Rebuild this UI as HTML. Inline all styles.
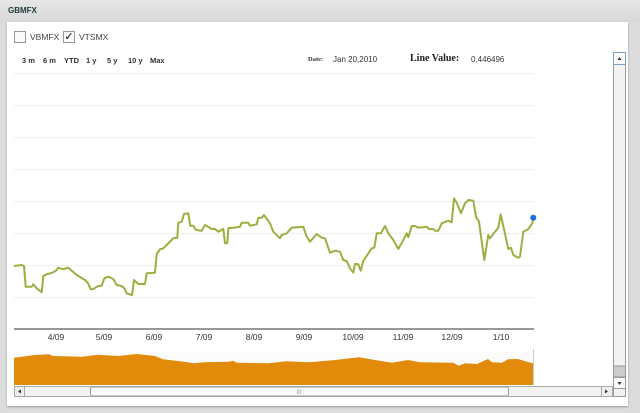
<!DOCTYPE html>
<html><head><style>
body{margin:0;width:640px;height:413px;background:#dcdcdc;font-family:"Liberation Sans",Verdana,sans-serif;overflow:hidden;position:relative}
.abs{position:absolute}
.t{font-size:8px;color:#333}
.r{position:absolute;top:56px;font-size:7.5px;font-weight:bold;color:#333}
</style></head><body>
<div class="abs" style="left:0;top:0;width:640px;height:22px;background:linear-gradient(#e6e6e6,#d8d8d8)"></div>
<div class="abs" style="left:8px;top:6px;font-size:8px;font-weight:bold;color:#1f3a3a">GBMFX</div>
<div class="abs" style="left:7px;top:22px;width:621px;height:384px;background:#fff;box-shadow:0 1px 2px #999"></div>
<div class="abs" style="left:14px;top:31px;width:10px;height:10px;border:1px solid #999;background:#fafafa"></div>
<div class="abs t" style="left:30px;top:32px;font-size:8.5px;color:#444">VBMFX</div>
<div class="abs" style="left:63px;top:31px;width:10px;height:10px;border:1px solid #999;background:#fafafa;font-size:11px;line-height:10px;text-align:center">✓</div>
<div class="abs t" style="left:79px;top:32px;font-size:8.5px;color:#444">VTSMX</div>
<div class="r" style="left:22px">3 m</div>
<div class="r" style="left:43px">6 m</div>
<div class="r" style="left:64px">YTD</div>
<div class="r" style="left:86px">1 y</div>
<div class="r" style="left:107px">5 y</div>
<div class="r" style="left:128px">10 y</div>
<div class="r" style="left:150px">Max</div>
<div class="abs" style="left:308px;top:56px;font-size:6.5px;font-weight:bold;font-family:'Liberation Serif',serif;color:#333">Date:</div>
<div class="abs" style="left:333px;top:55px;font-size:8px;color:#333">Jan 20,2010</div>
<div class="abs" style="left:410px;top:53px;font-size:10px;font-weight:bold;font-family:'Liberation Serif',serif;color:#222">Line Value:</div>
<div class="abs" style="left:471px;top:55px;font-size:8px;color:#333">0.446496</div>
<svg class="abs" style="left:0;top:0" width="640" height="413">
<g stroke="#eeeeee" stroke-width="1">
<line x1="14" y1="73.5" x2="534" y2="73.5"/><line x1="14" y1="105.5" x2="534" y2="105.5"/><line x1="14" y1="137.5" x2="534" y2="137.5"/><line x1="14" y1="169.5" x2="534" y2="169.5"/><line x1="14" y1="201.5" x2="534" y2="201.5"/><line x1="14" y1="233.5" x2="534" y2="233.5"/><line x1="14" y1="265.5" x2="534" y2="265.5"/><line x1="14" y1="297.5" x2="534" y2="297.5"/>
</g>
<line x1="14" y1="329" x2="534" y2="329" stroke="#777" stroke-width="1.5"/>
<polyline fill="none" stroke="#9ab040" stroke-width="2" stroke-linejoin="round" points="14,266 21.7,265 24,266 25.7,286.7 31.7,286.7 33.3,284.3 36.7,288.3 41.7,292.3 43.3,276 46.7,274.3 53.3,272.3 56.7,270 58.3,267.7 63.3,269.3 68.3,267.7 76.7,275 85,280 87.7,282.7 90.7,289.3 93.3,289 98.3,286 101.7,285.7 104.3,278.3 108.3,276.7 113.3,279 116.7,285 121.7,286 124.3,288.3 126.7,293.3 132,295 134,280 138.3,284 145,284 146.7,273.3 155,272.7 156.7,254 160,249.3 163.3,248.3 168.3,243.3 173.3,238.3 177.3,237.7 178.3,222.7 181.7,221.7 184,214 188.3,213.3 190.3,225.7 193.3,225.7 196,230 201.7,230.7 205,225 211.7,229 215,229 218.3,231.7 223.3,229 225,243.3 227.3,243.3 228.3,228.3 233.3,227.7 240,226.7 241.7,222.7 248.3,222.7 250,225.7 256.7,224.3 258.3,217.7 261.7,217.7 264,215 270,223.3 273.3,231.7 280,238.3 281.7,235 286.7,233.3 291.7,227.7 303.3,226.7 306.7,236.7 310,241.7 316.7,234 321.7,237.7 325,238.3 330,252.7 335,250.7 340,251.7 343.3,260 346.7,261 350,268.3 353.3,272.7 355,264 358.3,264.3 360.7,270.7 363.3,261 371.7,248.3 374.3,247.7 376.7,233.3 381,233.3 385,226 388.3,233.3 393.3,240 398.3,249 403.3,240 406.7,233.3 408.3,237.3 411.7,226 415,226 418.3,227.7 426.7,226.7 429,229 433.3,229 435,230.7 438.3,230.7 441.7,223.3 448.3,220.7 451.7,222.3 454,198.3 456.7,202.7 461,213.3 465,203.3 468.3,200 473.3,200.7 476,216.7 479,221.7 484.3,260 488.3,235 490,238.3 495,231.7 498.3,227.7 500.7,214.3 508.3,249 511,247.7 513.3,255 518.3,257.7 520,256.7 523.3,231.7 528.3,229 532.3,223.3 533.3,217.7"/>
<circle cx="533.3" cy="217.7" r="3" fill="#1a6fe0"/>
<g font-size="8.5" fill="#333" font-family="Liberation Sans,sans-serif" text-anchor="middle">
<text x="56" y="340">4/09</text><text x="104" y="340">5/09</text><text x="154" y="340">6/09</text><text x="204" y="340">7/09</text><text x="254" y="340">8/09</text><text x="304" y="340">9/09</text><text x="353" y="340">10/09</text><text x="403" y="340">11/09</text><text x="452" y="340">12/09</text><text x="501" y="340">1/10</text>
</g>
<rect x="14" y="352" width="520" height="33" fill="#fbfbfb"/>
<line x1="533.5" y1="349" x2="533.5" y2="385" stroke="#ccc"/>
<polygon fill="#e28a0a" points="14,357.7 35,355 49,354.3 53,356 82,356.7 98,354.7 118,356 137,354 155,356 163,359.3 184,361.7 194,363.3 204,362.3 229,361.7 233,360.7 237,362.7 269,363.3 286,361.3 310,362.3 335,360 359,357.3 375,360 392,362.7 408,360 420,362.3 453,362.7 459,365.7 465,363.3 477,364 488,359 492,362.3 502,362.7 508,359.3 518,359 527,361.7 533,363.3 533,385 14,385"/>
<rect x="14.5" y="386.5" width="598" height="10" fill="#f2f2f2" stroke="#aaa"/>
<rect x="90.5" y="387" width="418" height="9" rx="2" fill="#fafafa" stroke="#999"/>
<text x="299" y="394" font-size="6" fill="#999" text-anchor="middle">III</text>
<rect x="14.5" y="386.5" width="10" height="10" fill="#eee" stroke="#aaa"/>
<rect x="601.5" y="386.5" width="11" height="10" fill="#eee" stroke="#aaa"/>
<path d="M18 391.5 L21 389.5 L21 393.5Z M608 391.5 L605 389.5 L605 393.5Z" fill="#333"/>
<rect x="613.5" y="52.5" width="12" height="344" fill="#f2f2f2" stroke="#999"/>
<rect x="613.5" y="52.5" width="12" height="12" fill="#fafafa" stroke="#7aa0c8"/>
<rect x="613.5" y="366" width="12" height="11" fill="#ccc" stroke="#999"/>
<rect x="613.5" y="377.5" width="12" height="11" fill="#fafafa" stroke="#999"/>
<path d="M619.5 57 L617.5 60 L621.5 60Z M619.5 385 L617.5 382 L621.5 382Z" fill="#333"/>
</svg>
</body></html>
